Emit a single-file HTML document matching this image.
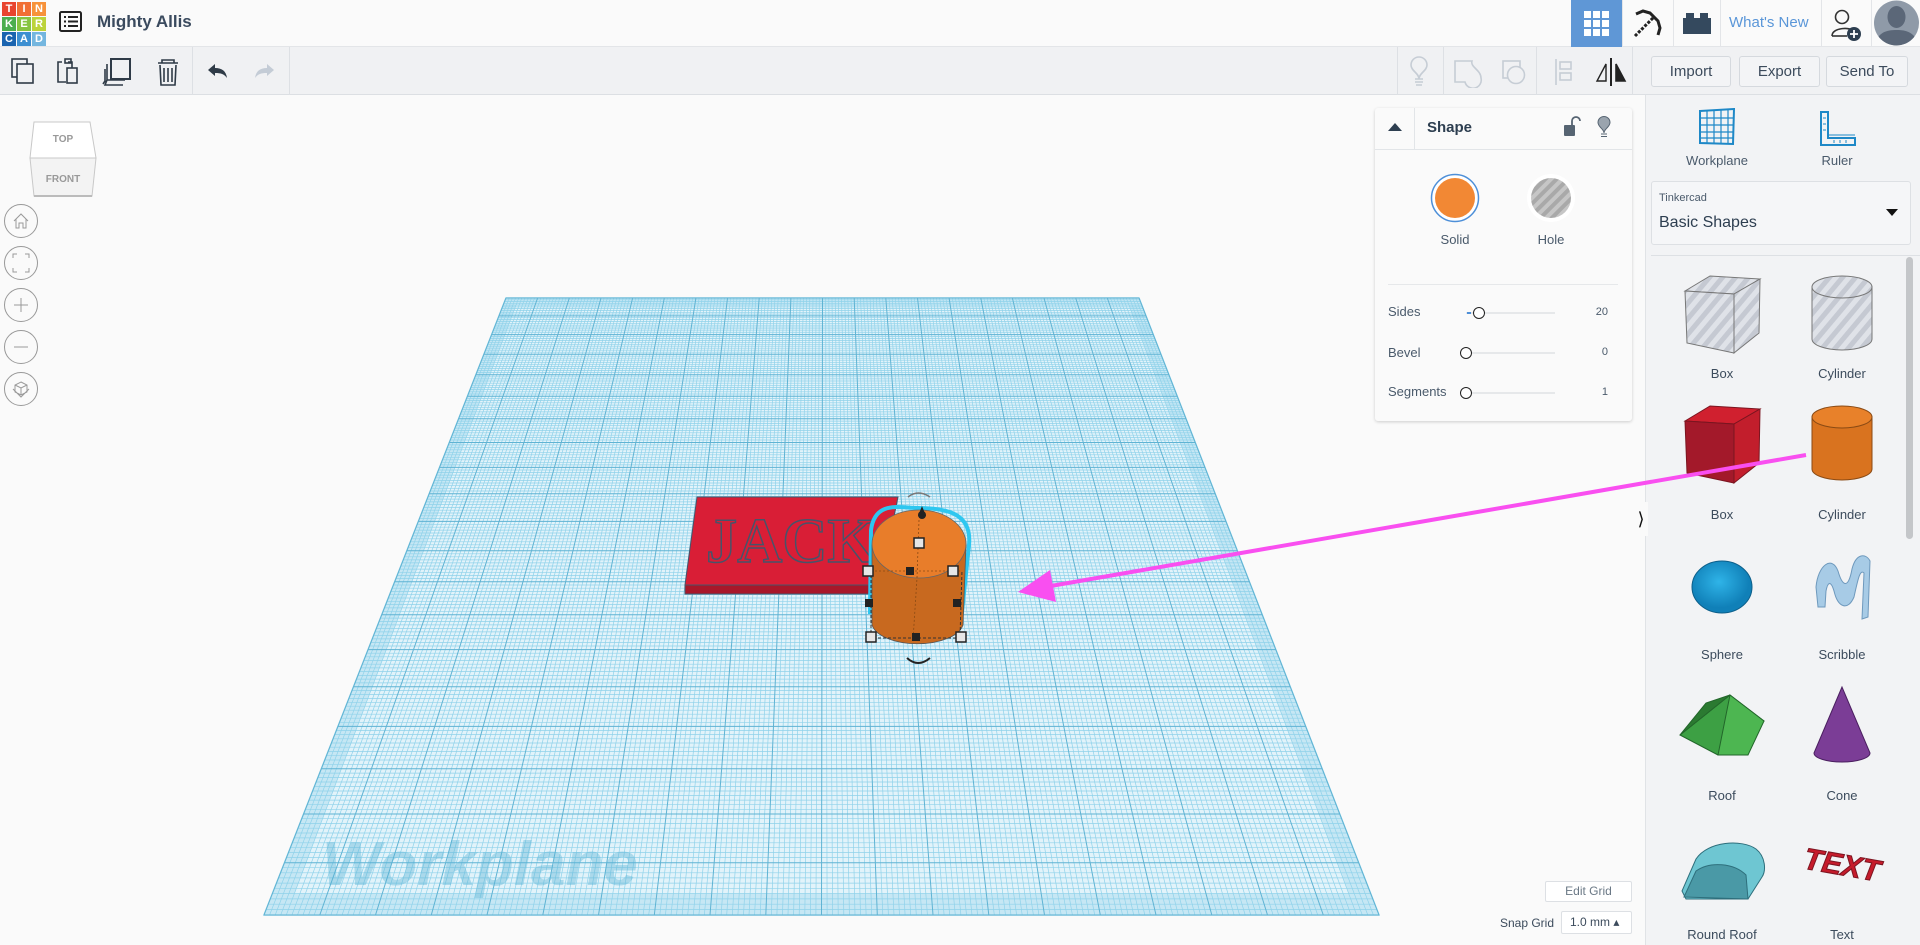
<!DOCTYPE html>
<html><head><meta charset="utf-8"><style>
*{margin:0;padding:0;box-sizing:border-box}
body{width:1920px;height:945px;overflow:hidden;background:#fafafa;font-family:"Liberation Sans",sans-serif;position:relative;color:#3c4b5c}
.abs{position:absolute}
.top{left:0;top:0;width:1920px;height:47px;background:#fafafa;border-bottom:1px solid #e3e5e8}
.tb{left:0;top:47px;width:1920px;height:48px;background:#f0f1f3;border-bottom:1px solid #dcdfe3}
.tile{position:absolute;width:14px;height:14px;color:#fff;font-size:11px;font-weight:bold;text-align:center;line-height:14px}
.btn{position:absolute;top:56px;height:31px;border:1px solid #d5d9de;border-radius:3px;background:#f3f4f6;font-size:15px;color:#3c4b5c;text-align:center;line-height:29px}
.vd{position:absolute;top:47px;width:1px;height:48px;background:#dde0e4}
.lbl{position:absolute;font-size:13px;color:#4a5a6b;text-align:center;width:120px}
.sl{position:absolute;font-size:12px;color:#4a5a6b}
</style></head><body>
<div class="abs top"></div>
<div class="tile" style="left:2px;top:2px;background:#e8442e">T</div>
<div class="tile" style="left:17px;top:2px;background:#f16f34">I</div>
<div class="tile" style="left:32px;top:2px;background:#f7923a">N</div>
<div class="tile" style="left:2px;top:17px;background:#4cae4f">K</div>
<div class="tile" style="left:17px;top:17px;background:#86c441">E</div>
<div class="tile" style="left:32px;top:17px;background:#bcd33a">R</div>
<div class="tile" style="left:2px;top:32px;background:#1a64b0">C</div>
<div class="tile" style="left:17px;top:32px;background:#3d8fd1">A</div>
<div class="tile" style="left:32px;top:32px;background:#74b6df">D</div>
<svg class="abs" style="left:59px;top:11px" width="24" height="22" viewBox="0 0 24 22"><rect x="1" y="1" width="21" height="19" rx="1.5" fill="none" stroke="#222" stroke-width="2"/><g fill="#222"><rect x="5" y="5" width="2" height="2"/><rect x="9" y="5" width="10" height="2"/><rect x="5" y="9.5" width="2" height="2"/><rect x="9" y="9.5" width="10" height="2"/><rect x="5" y="14" width="2" height="2"/><rect x="9" y="14" width="10" height="2"/></g></svg>
<div class="abs" style="left:97px;top:12px;font-size:17px;font-weight:bold;color:#3a4a5e">Mighty Allis</div>
<div class="abs" style="left:1571px;top:0;width:51px;height:47px;background:#5f97d6"></div>
<svg class="abs" style="left:1584px;top:11px" width="25" height="25"><g fill="#fff"><rect x="0" y="0" width="7" height="7"/><rect x="9" y="0" width="7" height="7"/><rect x="18" y="0" width="7" height="7"/><rect x="0" y="9" width="7" height="7"/><rect x="9" y="9" width="7" height="7"/><rect x="18" y="9" width="7" height="7"/><rect x="0" y="18" width="7" height="7"/><rect x="9" y="18" width="7" height="7"/><rect x="18" y="18" width="7" height="7"/></g></svg>
<svg class="abs" style="left:1632px;top:9px" width="30" height="30" viewBox="0 0 30 30"><path d="M4 5 L11 2 L18 4 L26 12 L28 19 L26 26" fill="none" stroke="#222" stroke-width="3"/><path d="M21 9 L3 27" stroke="#222" stroke-width="3" stroke-dasharray="3 1.5"/></svg>
<div class="abs" style="left:1622px;top:0;width:1px;height:47px;background:#e3e5e8"></div>
<div class="abs" style="left:1673px;top:0;width:1px;height:47px;background:#e3e5e8"></div>
<svg class="abs" style="left:1683px;top:13px" width="28" height="22"><rect x="0" y="5" width="28" height="16" fill="#34495e"/><rect x="3" y="0" width="8" height="6" fill="#34495e"/><rect x="17" y="0" width="8" height="6" fill="#34495e"/></svg>
<div class="abs" style="left:1720px;top:0;width:1px;height:47px;background:#e3e5e8"></div>
<div class="abs" style="left:1729px;top:14px;font-size:15px;color:#5a96d8">What's New</div>
<div class="abs" style="left:1821px;top:0;width:1px;height:47px;background:#e3e5e8"></div>
<svg class="abs" style="left:1831px;top:8px" width="32" height="34"><circle cx="11" cy="9" r="6.5" fill="none" stroke="#333" stroke-width="1.6"/><path d="M1 28 C1 19 21 19 21 23" fill="none" stroke="#333" stroke-width="1.6"/><path d="M1 28 H16" stroke="#333" stroke-width="1.6"/><circle cx="23" cy="26" r="7" fill="#2d3e50"/><path d="M23 22v8M19 26h8" stroke="#fff" stroke-width="1.8"/></svg>
<div class="abs" style="left:1871px;top:0;width:1px;height:47px;background:#e3e5e8"></div>
<svg class="abs" style="left:1873px;top:0" width="47" height="46"><defs><clipPath id="av"><circle cx="23.5" cy="23" r="22.5"/></clipPath></defs><circle cx="23.5" cy="23" r="22.5" fill="#8f9aa8"/><g clip-path="url(#av)" fill="#5b6778"><ellipse cx="23.5" cy="17" rx="9" ry="11"/><path d="M2 46 C4 32 14 30 23.5 30 C33 30 43 32 45 46Z"/></g></svg>
<div class="abs tb"></div>
<svg class="abs" style="left:10px;top:57px" width="280" height="30" viewBox="0 0 280 30" fill="none" stroke="#2f3b47" stroke-width="1.6">
<rect x="2" y="2" width="15" height="18"/><rect x="7" y="7" width="16" height="19" fill="#f0f1f3"/>
<path d="M52 5h-4v20h8M58 5h4v6"/><rect x="55" y="2" width="6" height="4"/><rect x="57" y="11" width="10" height="15"/>
<rect x="101" y="2" width="19" height="20" stroke-width="2"/><path d="M97 7v16h18M97 23l-2 5h18M95 12v12l-2 3"/>
<path d="M148 6h20M152 6v-3h12v3M150 8l1 20h14l1-20M154 11v14M158 11v14M162 11v14"/>
</svg>
<svg class="abs" style="left:204px;top:62px" width="80" height="18"><path d="M4 8 L11 2 V6 C18 6 22 9 23 16 C20 12 17 11 11 11 V14Z" fill="#2f3b47"/><path d="M70 8 L63 2 V6 C56 6 52 9 51 16 C54 12 57 11 63 11 V14Z" fill="#c4ccd6"/></svg>
<div class="vd" style="left:192px"></div><div class="vd" style="left:289px"></div>
<div class="vd" style="left:1397px"></div><div class="vd" style="left:1443px"></div><div class="vd" style="left:1536px"></div><div class="vd" style="left:1632px"></div>
<svg class="abs" style="left:1405px;top:56px" width="225" height="32" fill="none" stroke="#c6cdd5" stroke-width="1.6">
<path d="M14 23 C14 17 6 15 6 9 A8 8 0 0 1 22 9 C22 15 14 17 14 23M10 23h8M10 26h8M11 29h6"/>
<path d="M50 5h17c-2 6 9 9 9 17a8 8 0 0 1-16 4h-10z"/>
<rect x="98" y="5" width="17" height="17"/><circle cx="111" cy="19" r="8.5" fill="#f0f1f3"/>
<path d="M151 3v26"/><rect x="155" y="6" width="11" height="7"/><rect x="155" y="17" width="11" height="7"/>
<path d="M206 2v28" stroke="#222" stroke-width="2"/><path d="M201 8l-9 17h9z" stroke="#222" stroke-width="1.4"/><path d="M211 8l9 17h-9z" fill="#222" stroke="#222"/>
</svg>
<div class="btn" style="left:1651px;width:80px">Import</div>
<div class="btn" style="left:1739px;width:81px">Export</div>
<div class="btn" style="left:1826px;width:82px">Send To</div>
<svg id="wp" class="abs" style="left:0;top:95px" width="1645" height="850" viewBox="0 95 1645 850"></svg>
<svg class="abs" style="left:28px;top:118px" width="72" height="84"><path d="M6 4 H62 L68 40 H2 Z" fill="#fff" stroke="#c8c8c8"/><path d="M2 40 H68 L64 78 H6 Z" fill="#f3f3f3" stroke="#c8c8c8"/><path d="M6 78H64" stroke="#bbb" stroke-width="2"/><text x="35" y="24" font-size="10" font-weight="bold" fill="#999" text-anchor="middle">TOP</text><text x="35" y="64" font-size="10" font-weight="bold" fill="#999" text-anchor="middle">FRONT</text></svg>
<svg class="abs" style="left:3px;top:203px" width="36" height="206" fill="none" stroke="#999" stroke-width="1">
<circle cx="18" cy="18" r="16.5"/><circle cx="18" cy="60" r="16.5"/><circle cx="18" cy="102" r="16.5"/><circle cx="18" cy="144" r="16.5"/><circle cx="18" cy="186" r="16.5"/>
<path d="M11 18l7-7 7 7M13 16v9h3v-5h4v5h3v-9"/>
<path d="M10 55v-4h4M22 51h4v4M26 65v4h-4M14 69h-4v-4"/>
<path d="M18 95v14M11 102h14"/><path d="M11 144h14"/>
<path d="M18 179l6 3v7l-6 3-6-3v-7zM12 182l6 3 6-3M18 185v7M10 186l8 8 8-8"/>
</svg>
<div class="abs" style="left:1375px;top:108px;width:257px;height:313px;background:#fafafa;border-radius:3px;box-shadow:0 1px 3px rgba(0,0,0,.18)"></div>
<div class="abs" style="left:1375px;top:149px;width:257px;height:1px;background:#e2e5e8"></div>
<div class="abs" style="left:1414px;top:108px;width:1px;height:41px;background:#e2e5e8"></div>
<svg class="abs" style="left:1387px;top:122px" width="16" height="10"><path d="M1 9L8 1l7 8z" fill="#2d3e50"/></svg>
<div class="abs" style="left:1427px;top:119px;font-size:15px;font-weight:bold;color:#2d3e50">Shape</div>
<svg class="abs" style="left:1563px;top:116px" width="18" height="22"><path d="M9 9V5a4 4 0 0 1 8 0" fill="none" stroke="#566472" stroke-width="1.8"/><rect x="1" y="9" width="11" height="11" rx="1" fill="#566472"/></svg>
<svg class="abs" style="left:1597px;top:116px" width="14" height="22"><path d="M7 17C7 13 1 11 1 6.5a6 6 0 0 1 12 0C13 11 7 13 7 17z" fill="#9aa4ae" stroke="#566472"/><path d="M4 18h6M4 20.5h6" stroke="#566472"/></svg>
<svg class="abs" style="left:1430px;top:173px" width="50" height="50"><circle cx="25" cy="25" r="23.5" fill="#fff" stroke="#4d8fd8" stroke-width="1.5"/><circle cx="25" cy="25" r="20" fill="#f28834"/></svg>
<svg class="abs" style="left:1526px;top:173px" width="50" height="50"><defs><pattern id="hs" width="8" height="8" patternUnits="userSpaceOnUse" patternTransform="rotate(45)"><rect width="8" height="8" fill="#c6c6c6"/><rect width="4" height="8" fill="#a9a9a9"/></pattern></defs><circle cx="25" cy="25" r="24" fill="#fff"/><circle cx="25" cy="25" r="20" fill="url(#hs)"/></svg>
<div class="lbl" style="left:1395px;top:232px">Solid</div>
<div class="lbl" style="left:1491px;top:232px">Hole</div>
<div class="abs" style="left:1388px;top:284px;width:230px;height:1px;background:#e6e8ea"></div>
<div class="sl" style="left:1388px;top:304px;font-size:13px">Sides</div>
<div class="sl" style="left:1388px;top:345px;font-size:13px">Bevel</div>
<div class="sl" style="left:1388px;top:384px;font-size:13px">Segments</div>
<div class="abs" style="left:1466px;top:312px;width:89px;height:2px;background:#e6e8ea"></div>
<div class="abs" style="left:1466px;top:352px;width:89px;height:2px;background:#e6e8ea"></div>
<div class="abs" style="left:1466px;top:392px;width:89px;height:2px;background:#e6e8ea"></div>
<div class="abs" style="left:1467px;top:312px;width:4px;height:2px;background:#4d8fd8"></div>
<div class="abs" style="left:1473px;top:307px;width:12px;height:12px;border:1.5px solid #222;border-radius:50%;background:#fff"></div>
<div class="abs" style="left:1460px;top:347px;width:12px;height:12px;border:1.5px solid #222;border-radius:50%;background:#fff"></div>
<div class="abs" style="left:1460px;top:387px;width:12px;height:12px;border:1.5px solid #222;border-radius:50%;background:#fff"></div>
<div class="sl" style="left:1578px;width:30px;text-align:right;top:306px;font-size:11px">20</div>
<div class="sl" style="left:1578px;width:30px;text-align:right;top:346px;font-size:11px">0</div>
<div class="sl" style="left:1578px;width:30px;text-align:right;top:386px;font-size:11px">1</div>
<div class="abs" style="left:1545px;top:881px;width:87px;height:21px;border:1px solid #dde0e4;border-radius:2px;background:#fff;font-size:12px;color:#6a7885;text-align:center;line-height:19px">Edit Grid</div>
<div class="abs" style="left:1480px;top:916px;width:74px;text-align:right;font-size:12px;color:#3c4b5c">Snap Grid</div>
<div class="abs" style="left:1561px;top:911px;width:71px;height:23px;border:1px solid #dde0e4;border-radius:2px;background:#fff;font-size:12px;color:#3c4b5c;line-height:21px;padding-left:8px">1.0 mm &#9652;</div>
<div class="abs" style="left:1645px;top:95px;width:275px;height:850px;background:#f2f3f5;border-left:1px solid #e0e3e6"></div>
<svg class="abs" style="left:1697px;top:108px" width="42" height="38" fill="none" stroke="#1e88c7" stroke-width="1.2"><path d="M3 3l34 -2 -1 35 -33 -1z" stroke-width="2"/><path d="M10 3v32M17 2v34M24 2v34M31 1v35M3 10h34M3 17h34M3 24h34M3 30h34"/></svg>
<div class="lbl" style="left:1657px;top:153px">Workplane</div>
<svg class="abs" style="left:1819px;top:110px" width="38" height="38" fill="none" stroke="#1e88c7" stroke-width="2"><path d="M2 2h7v26h27v7H2z"/><path d="M9 25h27M4 8h3M4 14h3M4 20h3M15 30v3M21 30v3M27 30v3" stroke-width="1"/></svg>
<div class="lbl" style="left:1777px;top:153px">Ruler</div>
<div class="abs" style="left:1651px;top:181px;width:260px;height:64px;background:#f5f6f8;border:1px solid #dde0e4;border-radius:3px"></div>
<div class="abs" style="left:1659px;top:192px;font-size:11px;color:#4a5a6b">Tinkercad</div>
<div class="abs" style="left:1659px;top:214px;font-size:16px;color:#2d3e50">Basic Shapes</div>
<svg class="abs" style="left:1886px;top:209px" width="12" height="8"><path d="M0 0h12L6 7z" fill="#111"/></svg>
<div class="abs" style="left:1651px;top:255px;width:269px;height:1px;background:#dde0e4"></div>
<div class="abs" style="left:1906px;top:257px;width:7px;height:282px;background:#c4c6c9;border-radius:4px"></div>
<svg class="abs" style="left:1645px;top:255px" width="260" height="690">
<defs><pattern id="st" width="10" height="10" patternUnits="userSpaceOnUse" patternTransform="rotate(40)"><rect width="10" height="10" fill="#c5c9d2"/><rect width="5" height="10" fill="#dfe2e8"/></pattern>
<radialGradient id="sp" cx=".45" cy=".4"><stop offset="0" stop-color="#2fb4e8"/><stop offset="1" stop-color="#1080b8"/></radialGradient></defs>
<g transform="translate(77,58)"><path d="M-37 -22 L-12 -37 L38 -34 L12 -19Z" fill="url(#st)" stroke="#777"/><path d="M-37 -22 L12 -19 L12 40 L-35 30Z" fill="url(#st)" stroke="#777"/><path d="M12 -19 L38 -34 L37 20 L12 40Z" fill="url(#st)" stroke="#777"/></g>
<g transform="translate(197,58)"><path d="M-30 -26 V26 A30 11 0 0 0 30 26 V-26Z" fill="url(#st)" stroke="#777"/><ellipse cx="0" cy="-26" rx="30" ry="11" fill="url(#st)" stroke="#777"/></g>
<g transform="translate(77,188)"><path d="M-37 -22 L-12 -37 L38 -34 L12 -19Z" fill="#d0202f" stroke="#7a1520"/><path d="M-37 -22 L12 -19 L12 40 L-35 30Z" fill="#a3192a" stroke="#7a1520"/><path d="M12 -19 L38 -34 L37 20 L12 40Z" fill="#c21e2c" stroke="#7a1520"/></g>
<g transform="translate(197,188)"><path d="M-30 -26 V26 A30 11 0 0 0 30 26 V-26Z" fill="#d9731f" stroke="#8a4a14"/><ellipse cx="0" cy="-26" rx="30" ry="11" fill="#e8812a" stroke="#8a4a14"/></g>
<g transform="translate(77,332)"><ellipse cx="0" cy="0" rx="30" ry="26" fill="url(#sp)" stroke="#0d5f8a"/></g>
<g transform="translate(197,332)"><path d="M-26 0 C-24 -22 -10 -32 -4 -16 C0 -2 6 4 10 -18 C14 -34 24 -34 28 -26 L26 30 L20 32 L22 -14 C18 -18 16 -8 12 10 C6 24 -4 21 -8 4 C-11 -6 -14 -6 -16 4 L-17 20 L-24 20Z" fill="#a7cbe6" stroke="#6e99bd"/></g>
<g transform="translate(77,470)"><path d="M-42 10 L8 -30 L42 -4 L-4 30Z" fill="#3da044" stroke="#22662a"/><path d="M-42 10 L-16 -22 L8 -30Z" fill="#2b7a31" stroke="#22662a"/><path d="M8 -30 L42 -4 L26 30 L-4 30Z" fill="#4db651" stroke="#22662a"/></g>
<g transform="translate(197,470)"><path d="M0 -38 L-28 28 A28 9 0 0 0 28 28Z" fill="#7b3d96" stroke="#4b1f60"/></g>
<g transform="translate(77,612)"><path d="M-40 24 L-26 -8 C-14 -26 20 -28 34 -18 C44 -10 44 4 40 10 L26 32 L-36 32Z" fill="#6ec6d2" stroke="#2e6f7c"/><path d="M-38 30 L-26 4 C-12 -6 12 -4 24 8 L26 32Z" fill="#4a99a6" stroke="#2e6f7c"/></g>
<text x="197" y="620" font-size="30" font-weight="bold" font-style="italic" fill="#c61b2b" stroke="#7a1420" text-anchor="middle" transform="rotate(10 197 610)">TEXT</text>
<g font-family="Liberation Sans" font-size="13" fill="#3c4b5c" text-anchor="middle">
<text x="77" y="123">Box</text><text x="197" y="123">Cylinder</text>
<text x="77" y="264">Box</text><text x="197" y="264">Cylinder</text>
<text x="77" y="404">Sphere</text><text x="197" y="404">Scribble</text>
<text x="77" y="545">Roof</text><text x="197" y="545">Cone</text>
<text x="77" y="684">Round Roof</text><text x="197" y="684">Text</text>
</g></svg>
<div class="abs" style="left:1634px;top:502px;width:14px;height:34px;background:#fafafa;font-size:18px;line-height:34px;text-align:center;color:#111">&#10217;</div>
<svg class="abs" style="left:0;top:0;pointer-events:none" width="1920" height="945"><line x1="1806" y1="455" x2="1045" y2="587" stroke="#f94ff0" stroke-width="4"/><path d="M1018 592 L1050 570 L1056 602Z" fill="#f94ff0"/></svg>
<script>
(function(){
var svg=document.getElementById('wp');
var P=[[506,298],[1139,298],[1379,915],[264,915]];
function H(p){var x0=p[0][0],y0=p[0][1],x1=p[1][0],y1=p[1][1],x2=p[2][0],y2=p[2][1],x3=p[3][0],y3=p[3][1];
var dx1=x1-x2,dx2=x3-x2,dy1=y1-y2,dy2=y3-y2,sx=x0-x1+x2-x3,sy=y0-y1+y2-y3;
var den=dx1*dy2-dx2*dy1,g=(sx*dy2-dx2*sy)/den,h=(dx1*sy-sx*dy1)/den;
return [x1-x0+g*x1,x3-x0+h*x3,x0,y1-y0+g*y1,y3-y0+h*y3,y0,g,h];}
var m=H(P);function T(u,v){var w=m[6]*u+m[7]*v+1;return [(m[0]*u+m[1]*v+m[2])/w,(m[3]*u+m[4]*v+m[5])/w];}
var s='<polygon points="'+P.map(function(q){return q.join(',')}).join(' ')+'" fill="#e2f3fa" stroke="#8fd0e8" stroke-width="1.5"/>';
var b=0.02,inner=[T(b,b),T(1-b,b),T(1-b,1-b),T(b,1-b)];
s+='<path fill-rule="evenodd" d="M'+P.join('L')+'Z M'+inner.join('L')+'Z" fill="#bfe4f2" opacity=".8"/>';
var N=200,fine='',maj='';
for(var i=0;i<=N;i++){var t=i/N;var a=T(t,0),c=T(t,1),d=T(0,t),e=T(1,t);
var seg='M'+a[0].toFixed(1)+' '+a[1].toFixed(1)+'L'+c[0].toFixed(1)+' '+c[1].toFixed(1)+'M'+d[0].toFixed(1)+' '+d[1].toFixed(1)+'L'+e[0].toFixed(1)+' '+e[1].toFixed(1);
if(i%10==0)maj+=seg;else fine+=seg;}
s+='<path d="'+fine+'" stroke="#8fd2ea" stroke-width=".7" fill="none"/>';
s+='<path d="'+maj+'" stroke="#5fb3d3" stroke-width="1" fill="none"/>';
s+='<text x="322" y="885" font-size="62" font-weight="bold" font-style="italic" fill="#5ab4d6" opacity=".4" font-family="Liberation Sans">Workplane</text>';
s+='<path d="M685 585 L697 497 L898 497 L880 585Z" fill="#d91e36" stroke="#46546a" stroke-width="1"/>';
s+='<path d="M685 585 L880 585 L880 594 L685 594Z" fill="#a8172a" stroke="#46546a" stroke-width="1"/>';
s+='<text x="706" y="562" font-size="64" font-weight="bold" font-family="Liberation Serif" fill="#d91e36" stroke="#46546a" stroke-width="1.5" textLength="170" lengthAdjust="spacingAndGlyphs">JACK</text>';
s+='<path d="M871 530 C875 500 900 508 918 508 C950 508 972 515 969 545 L962 612 L870 612Z" fill="none" stroke="#2ec7f0" stroke-width="4"/>';
s+='<path d="M872 545 L872 625 A46 22 0 0 0 963 625 L966 545Z" fill="#c8691f" stroke="#555" stroke-width=".8"/>';
s+='<ellipse cx="919" cy="544" rx="47" ry="34" fill="#e87d2a" stroke="#666" stroke-width=".8"/>';
s+='<path d="M871 570 L871 638 L960 638 L962 570" fill="none" stroke="#333" stroke-dasharray="3 2" stroke-width="1"/>';
s+='<path d="M919 520 L917 578 L913 640M871 571H960" fill="none" stroke="#8a4a14" stroke-dasharray="2 2" stroke-width=".8"/>';
[[919,543],[868,571],[953,571],[871,637],[961,637]].forEach(function(q){s+='<rect x="'+(q[0]-5)+'" y="'+(q[1]-5)+'" width="10" height="10" fill="#e6e6e6" stroke="#222" stroke-width="1.5"/>';});
[[910,571],[869,603],[957,603],[916,637]].forEach(function(q){s+='<rect x="'+(q[0]-4)+'" y="'+(q[1]-4)+'" width="8" height="8" fill="#222"/>';});
s+='<path d="M922 506 L918 516 L926 516Z" fill="#222"/><circle cx="922" cy="515" r="4" fill="#222"/>';
s+='<path d="M908 497 Q918 489 930 497" fill="none" stroke="#777" stroke-width="1.5"/>';
s+='<path d="M907 658 Q918 668 930 658" fill="none" stroke="#222" stroke-width="2"/>';
svg.innerHTML=s;})();
</script>
</body></html>
